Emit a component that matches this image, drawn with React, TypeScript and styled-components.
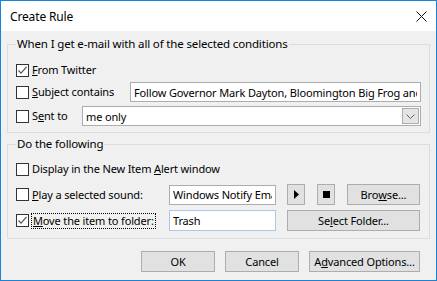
import React from 'react'
import styled, { createGlobalStyle } from 'styled-components'

const GlobalStyle = createGlobalStyle`
  html, body {
    margin: 0;
    padding: 0;
    background: #ffffff;
  }
  body {
    font-family: 'Noto Sans', 'Liberation Sans', sans-serif;
    font-size: 11px;
    letter-spacing: -0.15px;
    color: #000000;
  }
`

const Dialog = styled.div`
  width: 437px;
  height: 281px;
  box-sizing: border-box;
  border: 1px solid #1883d7;
  background: #f0f0f0;
  display: flex;
  flex-direction: column;
`

const TitleBar = styled.div`
  height: 30px;
  flex-shrink: 0;
  background: #ffffff;
  display: flex;
  align-items: center;
  justify-content: space-between;
  padding: 0 9px;
  font-size: 12px;
`

const Body = styled.div`
  padding: 5px 6px 0;
  display: flex;
  flex-direction: column;
`

const GroupBox = styled.fieldset<{ $pad: string; $mt?: number }>`
  margin: ${(p) => p.$mt ?? 0}px 0 0;
  padding: ${(p) => p.$pad};
  border: 1px solid #dcdcdc;
  min-width: 0;
  display: flex;
  flex-direction: column;
`

const Legend = styled.legend`
  padding: 0 1px;
  line-height: 16px;
  font-size: 11.5px;
`

const Row = styled.div<{ $h: number; $mt?: number }>`
  display: flex;
  align-items: center;
  height: ${(p) => p.$h}px;
  margin-top: ${(p) => p.$mt ?? 0}px;
`

const CheckCell = styled.label<{ $w?: number }>`
  display: flex;
  align-items: center;
  width: ${(p) => (p.$w ? `${p.$w}px` : 'auto')};
  flex-shrink: 0;
  white-space: nowrap;
`

const Box = styled.span`
  width: 13px;
  height: 13px;
  box-sizing: border-box;
  border: 1px solid #333333;
  background: #ffffff;
  display: inline-flex;
  align-items: center;
  justify-content: center;
  flex-shrink: 0;
`

const LabelText = styled.span<{ $focus?: boolean }>`
  margin-left: ${(p) => (p.$focus ? 2 : 3)}px;
  line-height: 14px;
  padding: 0 ${(p) => (p.$focus ? '1px' : '0')};
  border: ${(p) => (p.$focus ? '1px dotted #000' : 'none')};
`

const TextField = styled.input<{ $w?: number; $focus?: boolean }>`
  box-sizing: border-box;
  height: ${(p) => (p.$focus ? 21 : 20)}px;
  width: ${(p) => (p.$w ? `${p.$w}px` : 'auto')};
  flex: ${(p) => (p.$w ? '0 0 auto' : '1 1 auto')};
  min-width: 0;
  border: 1px solid ${(p) => (p.$focus ? '#a9c8ea' : '#abadb3')};
  background: #ffffff;
  padding: 0 3px;
  font: inherit;
  letter-spacing: inherit;
  color: #000000;
  outline: none;
`

const Combo = styled.div`
  flex: 1 1 auto;
  height: 20px;
  box-sizing: border-box;
  border: 1px solid #abadb3;
  background: #ffffff;
  display: flex;
  align-items: center;
  padding: 0 1px 0 3px;
`

const ComboText = styled.span`
  flex: 1;
`

const ComboButton = styled.span`
  width: 17px;
  height: 16px;
  box-sizing: border-box;
  border: 1px solid #acacac;
  background: #e5e5e5;
  display: flex;
  align-items: center;
  justify-content: center;
`

const Button = styled.button<{ $w: number; $h?: number; $ml?: number }>`
  box-sizing: border-box;
  width: ${(p) => p.$w}px;
  height: ${(p) => p.$h ?? 21}px;
  margin-left: ${(p) => p.$ml ?? 0}px;
  flex-shrink: 0;
  border: 1px solid #adadad;
  background: #e1e1e1;
  font: inherit;
  letter-spacing: inherit;
  color: #000000;
  padding: 0;
  display: flex;
  align-items: center;
  justify-content: center;
`

const Footer = styled.div`
  display: flex;
  justify-content: flex-end;
  gap: 10px;
  margin-top: 12px;
  padding-right: 10px;
`

const Check = ({ checked }: { checked?: boolean }) => (
  <Box>
    {checked && (
      <svg width="11" height="11" viewBox="0 0 11 11">
        <polyline points="1.5,5.5 4,8.2 9.5,2" fill="none" stroke="#5a5a5a" strokeWidth="1.2" />
      </svg>
    )}
  </Box>
)

const CloseIcon = () => (
  <svg width="11" height="11" viewBox="0 0 11 11">
    <path d="M0.5 0.5 L10.5 10.5 M10.5 0.5 L0.5 10.5" stroke="#111" strokeWidth="1" />
  </svg>
)

const Chevron = () => (
  <svg width="9" height="5" viewBox="0 0 9 5">
    <polyline points="0.5,0.5 4.5,4.5 8.5,0.5" fill="none" stroke="#606060" strokeWidth="1" />
  </svg>
)

const PlayIcon = () => (
  <svg width="5" height="9" viewBox="0 0 5 9">
    <polygon points="0,0 5,4.5 0,9" fill="#000" />
  </svg>
)

const StopIcon = () => (
  <svg width="7" height="7" viewBox="0 0 7 7">
    <rect width="7" height="7" fill="#000" />
  </svg>
)

export default function App() {
  return (
    <>
      <GlobalStyle />
      <Dialog>
        <TitleBar>
          <span>Create Rule</span>
          <CloseIcon />
        </TitleBar>
        <Body>
          <GroupBox $pad="8px 8px 6px 8px">
            <Legend>When I get e-mail with all of the selected conditions</Legend>
            <Row $h={20}>
              <CheckCell>
                <Check checked />
                <LabelText>
                  <u>F</u>rom Twitter
                </LabelText>
              </CheckCell>
            </Row>
            <Row $h={20} $mt={2}>
              <CheckCell $w={114}>
                <Check />
                <LabelText>
                  <u>S</u>ubject contains
                </LabelText>
              </CheckCell>
              <TextField readOnly value="Follow Governor Mark Dayton, Bloomington Big Frog and other people" />
            </Row>
            <Row $h={20} $mt={4}>
              <CheckCell $w={66}>
                <Check />
                <LabelText>
                  S<u>e</u>nt to
                </LabelText>
              </CheckCell>
              <Combo>
                <ComboText>me only</ComboText>
                <ComboButton>
                  <Chevron />
                </ComboButton>
              </Combo>
            </Row>
          </GroupBox>

          <GroupBox $pad="7px 8px 7px 8px" $mt={3}>
            <Legend>Do the following</Legend>
            <Row $h={20}>
              <CheckCell>
                <Check />
                <LabelText>
                  Display in the New Item <u>A</u>lert window
                </LabelText>
              </CheckCell>
            </Row>
            <Row $h={21} $mt={5}>
              <CheckCell $w={153}>
                <Check />
                <LabelText>
                  <u>P</u>lay a selected sound:
                </LabelText>
              </CheckCell>
              <TextField $w={107} readOnly value="Windows Notify Email.wav" />
              <Button $w={18} $ml={11} aria-label="Play">
                <PlayIcon />
              </Button>
              <Button $w={18} $ml={12} aria-label="Stop">
                <StopIcon />
              </Button>
              <Button $w={73} $ml={12}>
                Bro<u>w</u>se...
              </Button>
            </Row>
            <Row $h={21} $mt={5}>
              <CheckCell $w={153}>
                <Check checked />
                <LabelText $focus>
                  <u>M</u>ove the item to folder:
                </LabelText>
              </CheckCell>
              <TextField $w={107} $focus readOnly value="Trash" />
              <Button $w={133} $ml={11}>
                Se<u>l</u>ect Folder...
              </Button>
            </Row>
          </GroupBox>

          <Footer>
            <Button $w={74}>OK</Button>
            <Button $w={74}>Cancel</Button>
            <Button $w={111}>
              A<u>d</u>vanced Options...
            </Button>
          </Footer>
        </Body>
      </Dialog>
    </>
  )
}
